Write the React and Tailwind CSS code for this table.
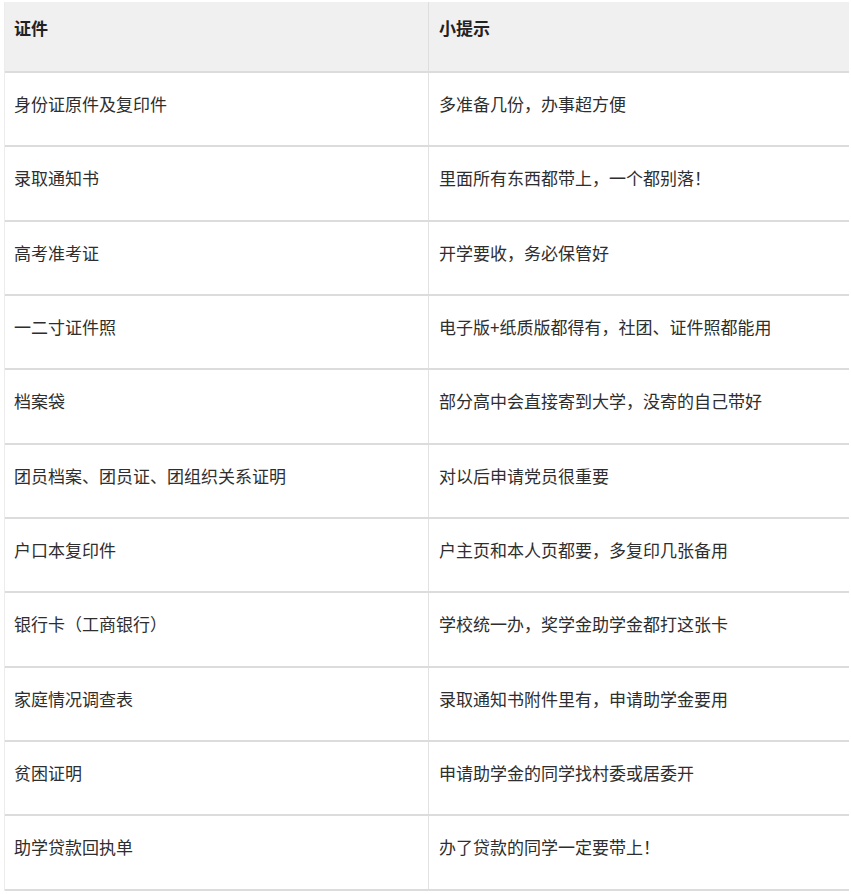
import React from "react";

const rows = [
  ["身份证原件及复印件", "多准备几份，办事超方便"],
  ["录取通知书", "里面所有东西都带上，一个都别落！"],
  ["高考准考证", "开学要收，务必保管好"],
  ["一二寸证件照", "电子版+纸质版都得有，社团、证件照都能用"],
  ["档案袋", "部分高中会直接寄到大学，没寄的自己带好"],
  ["团员档案、团员证、团组织关系证明", "对以后申请党员很重要"],
  ["户口本复印件", "户主页和本人页都要，多复印几张备用"],
  ["银行卡（工商银行）", "学校统一办，奖学金助学金都打这张卡"],
  ["家庭情况调查表", "录取通知书附件里有，申请助学金要用"],
  ["贫困证明", "申请助学金的同学找村委或居委开"],
  ["助学贷款回执单", "办了贷款的同学一定要带上！"],
];

export default function App() {
  return (
    <div
      className="w-[851px] h-[894px] overflow-hidden bg-white pl-[4px] pr-[2px] pt-[2px]"
      style={{ fontFamily: '"Noto Sans CJK SC", "Noto Sans", sans-serif' }}
    >
      <div className="border-l border-[#ececec]">
        <div className="grid grid-cols-[424px_1fr] h-[71px] bg-[#f0f0f0] border-b-2 border-[#dcdcdc] text-[17px] font-bold text-[#222]">
          <div className="pl-[9px] pt-[14px] leading-[24px] border-r border-[#dedede]">证件</div>
          <div className="pl-[10px] pt-[14px] leading-[24px]">小提示</div>
        </div>
        {rows.map(([a, b], i) => (
          <div
            key={i}
            className="grid grid-cols-[424px_1fr] h-[74.33px] border-b-2 border-[#dcdcdc] text-[17px] text-[#2e2e2e]"
          >
            <div className="pl-[9px] pt-[19px] leading-[24px] border-r border-[#e2e2e2]">{a}</div>
            <div className="pl-[10px] pt-[19px] leading-[24px]">{b}</div>
          </div>
        ))}
      </div>
    </div>
  );
}
